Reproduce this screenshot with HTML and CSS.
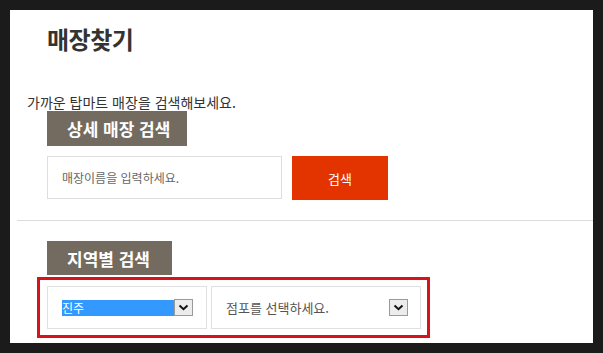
FILE: index.html
```html
<!DOCTYPE html>
<html lang="ko">
<head>
<meta charset="utf-8">
<link rel="stylesheet" href="styles.css">
</head>
<body>
<div class="page">
  <h1 class="title">매장찾기</h1>
  <p class="desc">가까운 탑마트 매장을 검색해보세요.</p>
  <div class="tab tab-wide">상세 매장 검색</div>
  <div class="search-row">
    <div class="input">매장이름을 입력하세요.</div>
    <div class="btn">검색</div>
  </div>
  <div class="divider"></div>
  <div class="tab tab-narrow">지역별 검색</div>
  <div class="region">
    <div class="select select-area">
      <span class="selected">진주</span>
      <span class="arrow"><svg width="11" height="7" viewBox="0 0 11 7"><path d="M1.5 1.5 L5.5 5.2 L9.5 1.5" fill="none" stroke="#111" stroke-width="2"/></svg></span>
    </div>
    <div class="select select-store">
      <span class="placeholder">점포를 선택하세요.</span>
      <span class="arrow"><svg width="11" height="7" viewBox="0 0 11 7"><path d="M1.5 1.5 L5.5 5.2 L9.5 1.5" fill="none" stroke="#111" stroke-width="2"/></svg></span>
    </div>
  </div>
</div>
</body>
</html>
```
FILE: styles.css
```css
html, body {
  margin: 0;
  padding: 0;
}
body {
  background: #1b1b1b;
  padding: 10px;
  height: 353px;
  box-sizing: border-box;
  font-family: "Noto Sans CJK KR", "Noto Sans", sans-serif;
  overflow: hidden;
}
.page {
  background: #fff;
  height: 333px;
  overflow: hidden;
}
.title {
  margin: 14px 0 0 37px;
  font-size: 24px;
  line-height: 30px;
  font-weight: 700;
  color: #333;
  letter-spacing: -0.5px;
}
.desc {
  margin: 40px 0 0 17px;
  font-size: 14px;
  line-height: 16px;
  color: #333;
}
.tab {
  margin: 1px 0 0 37px;
  background: #736b60;
  color: #fff;
  font-size: 17px;
  font-weight: 700;
  display: flex;
  align-items: center;
  box-sizing: border-box;
  padding-left: 20px;
}
.tab-wide {
  width: 140px;
  height: 35px;
}
.tab-narrow {
  width: 125px;
  height: 34px;
  margin-top: 20px;
}
.search-row {
  display: flex;
  gap: 10px;
  margin: 10px 0 0 37px;
  align-items: flex-start;
}
.input {
  width: 235px;
  height: 43px;
  box-sizing: border-box;
  border: 1px solid #dedede;
  padding-left: 14px;
  display: flex;
  align-items: center;
  font-size: 12px;
  color: #666;
}
.btn {
  width: 96px;
  height: 44px;
  background: #e33400;
  color: #fff;
  font-size: 13px;
  display: flex;
  align-items: center;
  justify-content: center;
}
.divider {
  margin: 20px 0 0 7px;
  height: 1px;
  background: #dcdcdc;
}
.region {
  margin: 2px 0 0 27px;
  width: 393px;
  height: 61px;
  box-sizing: border-box;
  border: 3px solid #d6121c;
  padding: 6px 6px 6px 7px;
  display: flex;
  gap: 4px;
}
.select {
  height: 43px;
  box-sizing: border-box;
  border: 1px solid #e0e0e0;
  display: flex;
  align-items: center;
}
.select-area {
  width: 160px;
  padding-left: 14px;
}
.select-store {
  width: 210px;
  padding-left: 14px;
}
.selected {
  width: 112px;
  height: 16px;
  background: #3399ff;
  color: #fff;
  font-size: 12px;
  line-height: 16px;
}
.placeholder {
  width: 163px;
  font-size: 13px;
  color: #555;
}
.arrow {
  width: 19px;
  height: 17px;
  box-sizing: border-box;
  border: 1px solid #9a9a9a;
  background: #ececec;
  display: flex;
  align-items: center;
  justify-content: center;
}
.arrow svg {
  display: block;
}
```
